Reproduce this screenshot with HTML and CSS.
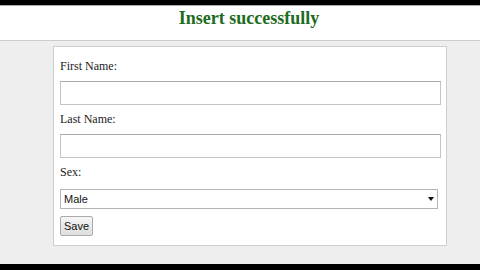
FILE: index.html
```html
<!DOCTYPE html>
<html>
<head>
<meta charset="utf-8">
<link rel="stylesheet" href="styles.css">
</head>
<body>
<div class="topbar"></div>
<div class="header"><h1 class="title">Insert successfully</h1></div>
<div class="main">
  <form class="card">
    <label class="lbl">First Name:</label>
    <input class="field" type="text">
    <label class="lbl">Last Name:</label>
    <input class="field" type="text">
    <label class="lbl lbl-sex">Sex:</label>
    <div class="selwrap">
      <select class="sel"><option>Male</option><option>Female</option></select>
    </div>
    <button class="btn" type="button">Save</button>
  </form>
</div>
<div class="bottombar"></div>
</body>
</html>
```
FILE: styles.css
```css
html, body { margin: 0; padding: 0; }
body {
  width: 480px; height: 270px; overflow: hidden;
  font-family: "Liberation Serif", "Times New Roman", serif;
  background: #eee;
  display: flex; flex-direction: column;
}
.topbar { height: 5px; background: #000; border-bottom: 1px solid #aaa; flex: none; }
.header {
  height: 34px; background: #fff; border-bottom: 1px solid #ccc; flex: none;
  display: flex; justify-content: center; padding-left: 18px;
}
.title {
  margin: 0; padding-top: 2px;
  font-size: 18px; line-height: 20px; font-weight: bold; color: #1d6b1d;
}
.main { flex: 1; background: #eee; padding-top: 5px; }
.card {
  box-sizing: border-box;
  margin: 0 0 0 53px; width: 394px;
  background: #fff; border: 1px solid #cfcfcf;
  padding: 12px 4px 9px 6px;
  display: flex; flex-direction: column; align-items: flex-start;
}
.lbl { font-size: 12px; line-height: 14px; color: #222; height: 14px; margin-bottom: 8px; }
.field {
  box-sizing: border-box; width: 381px; height: 24px; margin: 0 0 7px 0;
  border: 1px solid #c4c4c4; border-top-color: #aaa; border-radius: 0;
  background: #fff; padding: 0 4px; outline: none;
}
.lbl-sex { margin-bottom: 10px; }
.selwrap { position: relative; width: 378px; height: 20px; margin-bottom: 7px; }
.sel {
  -webkit-appearance: none; appearance: none;
  box-sizing: border-box; width: 378px; height: 20px; margin: 0;
  border: 1px solid #b5b5b5; border-radius: 0; background: #fff;
  font-family: "Liberation Sans", Arial, sans-serif; font-size: 11px; color: #111;
  padding: 0 0 0 3px; outline: none;
}
.selwrap::after {
  content: ""; position: absolute; right: 4px; top: 8px;
  border-left: 3px solid transparent; border-right: 3px solid transparent;
  border-top: 4px solid #111;
}
.btn {
  box-sizing: border-box; width: 33px; height: 20px; margin: 0; padding: 0;
  border: 1px solid #ababab; border-radius: 2px;
  background: linear-gradient(#f6f6f6, #dedede);
  font-family: "Liberation Sans", Arial, sans-serif; font-size: 11px; color: #111;
}
.bottombar { height: 6px; background: #000; flex: none; }
```
